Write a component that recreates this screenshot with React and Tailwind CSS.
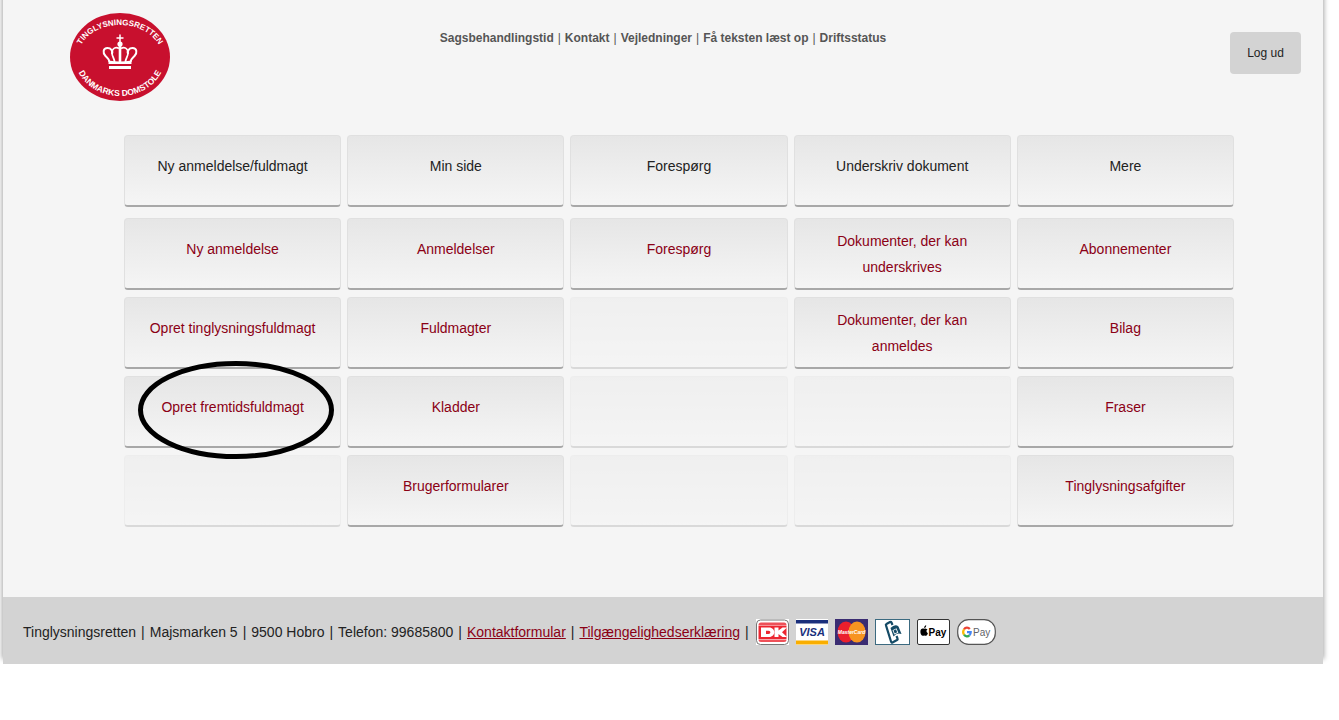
import React from "react";

const headings = ["Ny anmeldelse/fuldmagt", "Min side", "Forespørg", "Underskriv dokument", "Mere"];

const rows = [
  ["Ny anmeldelse", "Anmeldelser", "Forespørg", "Dokumenter, der kan underskrives", "Abonnementer"],
  ["Opret tinglysningsfuldmagt", "Fuldmagter", "", "Dokumenter, der kan anmeldes", "Bilag"],
  ["Opret fremtidsfuldmagt", "Kladder", "", "", "Fraser"],
  ["", "Brugerformularer", "", "", "Tinglysningsafgifter"],
];

const topLinks = ["Sagsbehandlingstid", "Kontakt", "Vejledninger", "Få teksten læst op", "Driftsstatus"];

const footerItems = [
  { label: "Tinglysningsretten" },
  { label: "Majsmarken 5" },
  { label: "9500 Hobro" },
  { label: "Telefon: 99685800" },
  { label: "Kontaktformular", link: true },
  { label: "Tilgængelighedserklæring", link: true },
];

const tile =
  "flex h-[72px] justify-center rounded border border-b-2 border-[#e0e0e0] border-b-[#a8a8a8] bg-linear-to-b from-[#e6e6e6] to-[#f5f5f5] text-center text-sm leading-[26px]";

function Logo() {
  return (
    <svg viewBox="0 0 100 88" className="h-[88px] w-[100px]" role="img" aria-label="Tinglysningsretten, Danmarks Domstole">
      <ellipse cx="50" cy="44" rx="50" ry="44" fill="#c8102e" />
      <defs>
        <path id="logo-top" d="M8 44 A42 32 0 0 1 92 44" />
        <path id="logo-bottom" d="M5 44 A45 39 0 0 0 95 44" />
      </defs>
      <g fill="#fff" fontFamily="'Liberation Sans', sans-serif" fontWeight="700" textAnchor="middle">
        <text fontSize="8">
          <textPath href="#logo-top" startOffset="50%">TINGLYSNINGSRETTEN</textPath>
        </text>
        <text fontSize="8.500">
          <textPath href="#logo-bottom" startOffset="50%">DANMARKS DOMSTOLE</textPath>
        </text>
      </g>
      <g fill="none" stroke="#fff">
        <path d="M50 21.500v9M46.500 25h7" strokeWidth="1.500" />
        <path d="M39.500 49c0-3-2-4-4-6-3-3-2.500-8 2-8 3.500 0 5.500 3 4.500 6M60.500 49c0-3 2-4 4-6 3-3 2.500-8-2-8-3.500 0-5.500 3-4.500 6" strokeWidth="2" />
        <path d="M44.500 49c0-4-2.500-5-2.500-9 0-5 4-6.500 7-4.500M55.500 49c0-4 2.500-5 2.500-9 0-5-4-6.500-7-4.500" strokeWidth="1.700" />
        <path d="M50 31v18" strokeWidth="2.600" />
      </g>
      <circle cx="50" cy="31" r="2.600" fill="#fff" />
      <path d="M38.500 47.500q11.500 2 23 0V51h-23zM39 53h22v3H39z" fill="#fff" />
    </svg>
  );
}

function Dankort() {
  return (
    <svg viewBox="0 0 33 26" className="h-[26px] w-[33px]" role="img" aria-label="Dankort">
      <rect width="33" height="26" fill="#fff" />
      <rect x=".5" y="1" width="32" height="24.500" rx="4" fill="#fff" stroke="#777" />
      <path d="M5 3.500h23q2.500 0 2.500 2.500H2.500q0-2.500 2.500-2.500zM2.500 20.500h28q0 2.500-2.500 2.500H5q-2.500 0-2.500-2.500z" fill="#ee5058" />
      <path d="M2.500 6.500h28v13.500h-28z" fill="#ec2630" />
      <path d="M5 8.500h8c7 0 7 9.500 0 9.500H5zm5 3.200v3.300h2.500c2.500 0 2.500-3.300 0-3.300zM18.500 8.500h4v3l4-3H31l-5 4.800 5 4.700h-4.500l-4-3v3h-4z" fill="#fff" fillRule="evenodd" />
    </svg>
  );
}

function Visa() {
  return (
    <svg viewBox="0 0 32 26" className="h-[26px] w-8" role="img" aria-label="Visa">
      <rect width="32" height="26" fill="#fff" />
      <rect y="1" width="32" height="3.500" fill="#1a2f7c" />
      <rect y="21.500" width="32" height="4" fill="#f9ae00" />
      <text x="16" y="17" textAnchor="middle" fill="#1a2f7c" fontFamily="'Liberation Sans', sans-serif" fontWeight="700" fontStyle="italic" fontSize="11">VISA</text>
    </svg>
  );
}

function Mastercard() {
  return (
    <svg viewBox="0 0 33 26" className="h-[26px] w-[33px]" role="img" aria-label="MasterCard">
      <rect width="33" height="26" fill="#3a2c72" />
      <ellipse cx="11" cy="13" rx="8.500" ry="10.500" fill="#eb1f2d" />
      <ellipse cx="22" cy="13" rx="8.500" ry="10.500" fill="#f79420" />
      <text x="16.500" y="15" textAnchor="middle" fill="#fff" fontFamily="'Liberation Sans', sans-serif" fontWeight="700" fontStyle="italic" fontSize="5">MasterCard</text>
    </svg>
  );
}

function MobilePay() {
  return (
    <svg viewBox="0 0 35 26" className="h-[26px] w-[35px]" role="img" aria-label="MobilePay">
      <rect x=".5" y=".5" width="34" height="25" fill="#fff" stroke="#3c6a80" />
      <path d="M17.500 6l-1-2.500q-.5-1-1.500-.5l-3.500 2q-1 .5-.5 1.500l5 16q.5 1.500 1.500 1l4.500-2.500q1-.5.5-1.500l-1-2.500" fill="none" stroke="#154b66" strokeWidth="2.200" />
      <path d="M15.500 9q4.500-4.500 8-1.500L26.500 15q-4.500-2-8 2.500z" fill="#154b66" />
      <path d="M17.500 11.200l4-2 1.800 4.500-4 1.800z" fill="#fff" />
      <path d="M18.500 11.500l2.500-1.200 1.200 3-2.500 1.200z" fill="#154b66" />
    </svg>
  );
}

function ApplePay() {
  return (
    <svg viewBox="0 0 33 26" className="h-[26px] w-[33px]" role="img" aria-label="Apple Pay">
      <rect x=".5" y=".5" width="32" height="25" rx="1.500" fill="#fff" stroke="#333" />
      <path d="M7.200 9c-.2-1.500.8-2.500 2-2.800.1 1.500-.8 2.700-2 2.800zM9.700 10c-.9-.9-1.700-.6-2.500-.3-1-.4-2.200-.6-3.100.5-1.500 2-.3 6.300 1.600 6.600.6 0 1-.4 1.600-.4s1 .4 1.600.4c1-.1 1.700-1.500 2-2.600-1.800-.8-1.900-3.200-.3-4.200z" fill="#000" />
      <text x="11.500" y="16.500" fill="#000" fontFamily="'Liberation Sans', sans-serif" fontWeight="700" fontSize="10">Pay</text>
    </svg>
  );
}

function GooglePay() {
  return (
    <svg viewBox="0 0 39 26" className="h-[26px] w-[39px]" role="img" aria-label="Google Pay">
      <rect x=".7" y=".7" width="37.600" height="24.600" rx="11" fill="#fff" stroke="#555" strokeWidth="1.200" />
      <g fill="none" strokeWidth="2.200">
        <path d="M12.800 10A3.800 4.500 0 0 0 7 10.300" stroke="#ea4335" />
        <path d="M7 10.300a4 4.500 0 0 0 0 5.400" stroke="#fbbc04" />
        <path d="M7 15.700a3.800 4.500 0 0 0 5.500.5" stroke="#34a853" />
        <path d="M12.500 16.200q1.200-1 1.200-3H10" stroke="#4285f4" />
      </g>
      <text x="16" y="17" fill="#5f6368" fontFamily="'Liberation Sans', sans-serif" fontSize="10">Pay</text>
    </svg>
  );
}

function Tile({ label }) {
  if (!label) return <div className={`${tile} opacity-35`} />;
  const twoLines = label.startsWith("Dokumenter");
  return (
    <a href="#" className={`${tile} relative px-5 text-[#8b0015] ${twoLines ? "pt-[9px]" : "pt-[17px]"}`}>
      {label}
      {label === "Opret fremtidsfuldmagt" && (
        <svg viewBox="0 0 196 98" className="pointer-events-none absolute -top-4 left-[13px] z-10 h-[98px] w-[196px]" aria-hidden="true">
          <ellipse cx="98" cy="49" rx="95.500" ry="46.500" fill="none" stroke="#000" strokeWidth="5" />
        </svg>
      )}
    </a>
  );
}

export default function App() {
  return (
    <div className="bg-white font-['Liberation_Sans',sans-serif] text-[#222]">
      <div className="mr-4 ml-[3px] bg-[#f5f5f5] shadow-[0_-6px_5px_1px_rgba(0,0,0,0.35)]">
        <header className="grid grid-cols-[1fr_auto_1fr] items-start px-[22px]">
          <a href="#" className="mt-[13px] ml-[45px] justify-self-start"><Logo /></a>
          <nav className="mt-7 flex gap-1 text-xs leading-5 font-bold text-[#555]">
            {topLinks.map((link, i) => (
              <React.Fragment key={link}>
                {i > 0 && <span className="font-normal">|</span>}
                <a href="#">{link}</a>
              </React.Fragment>
            ))}
          </nav>
          <button type="button" className="mt-8 h-[42px] w-[71px] justify-self-end rounded bg-[#d3d3d3] text-xs">Log ud</button>
        </header>
        <main className="pt-[34px] pr-[89px] pb-[70px] pl-[121px]">
          <div className="mb-[11px] grid grid-cols-5 gap-[6px]">
            {headings.map((h) => (
              <h2 key={h} className={`${tile} pt-[17px]`}>{h}</h2>
            ))}
          </div>
          <div className="grid grid-cols-5 gap-x-[6px] gap-y-[7px]">
            {rows.flat().map((label, i) => (
              <Tile key={i} label={label} />
            ))}
          </div>
        </main>
        <footer className="flex h-[67px] items-center gap-[7px] bg-[#d3d3d3] px-5 pt-[3px] text-sm">
          <div className="flex gap-[5px] whitespace-nowrap">
            {footerItems.map(({ label, link }) => (
              <React.Fragment key={label}>
                {link ? <a href="#" className="text-[#8b0015] underline">{label}</a> : <span>{label}</span>}
                <span>|</span>
              </React.Fragment>
            ))}
          </div>
          <div className="flex gap-[7px]">
            <Dankort />
            <Visa />
            <Mastercard />
            <MobilePay />
            <ApplePay />
            <GooglePay />
          </div>
        </footer>
      </div>
    </div>
  );
}
